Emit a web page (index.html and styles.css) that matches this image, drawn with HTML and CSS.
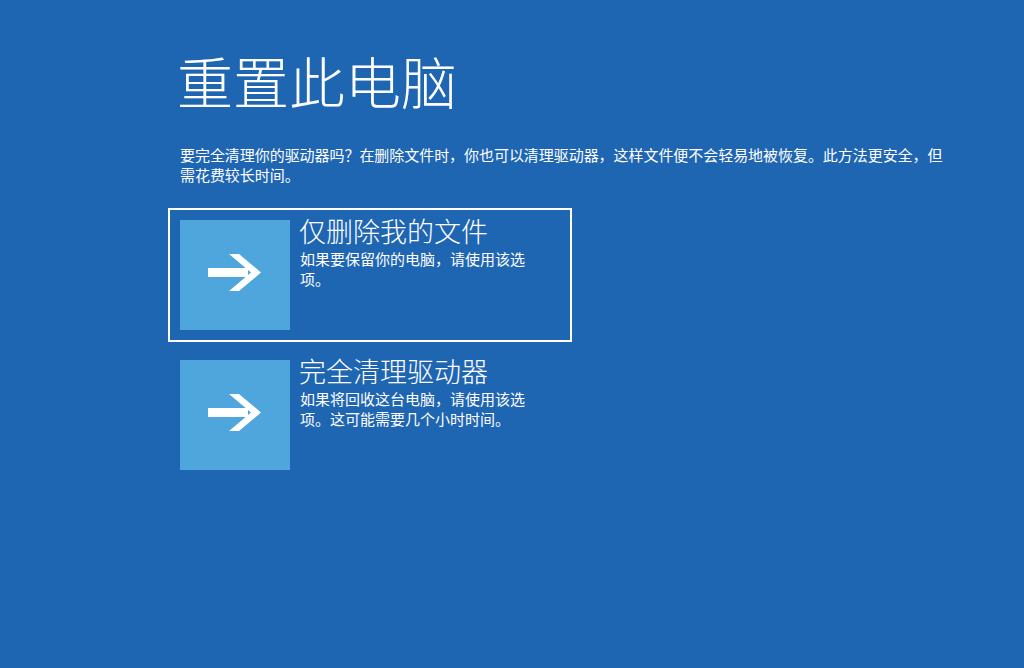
FILE: index.html
```html
<!DOCTYPE html>
<html lang="zh-CN">
<head>
<meta charset="utf-8">
<title>重置此电脑</title>
<link rel="stylesheet" href="styles.css">
</head>
<body>
<main class="page">
  <h1 class="title">重置此电脑</h1>
  <p class="desc">要完全清理你的驱动器吗？在删除文件时，你也可以清理驱动器，这样文件便不会轻易地被恢复。此方法更安全，但需花费较长时间。</p>
  <div class="options">
    <div class="option selected">
      <div class="tile">
        <svg class="arrow" viewBox="0 0 53 37" width="53" height="37" aria-hidden="true">
          <polygon points="0,14 40,14 40,23 0,23" fill="#fff"/>
          <polygon points="21,0 31,0 53,18.5 31,37 21,37 43,18.5" fill="#fff"/>
        </svg>
      </div>
      <div class="text">
        <div class="heading">仅删除我的文件</div>
        <div class="sub">如果要保留你的电脑，请使用该选项。</div>
      </div>
    </div>
    <div class="option">
      <div class="tile">
        <svg class="arrow" viewBox="0 0 53 37" width="53" height="37" aria-hidden="true">
          <polygon points="0,14 40,14 40,23 0,23" fill="#fff"/>
          <polygon points="21,0 31,0 53,18.5 31,37 21,37 43,18.5" fill="#fff"/>
        </svg>
      </div>
      <div class="text">
        <div class="heading">完全清理驱动器</div>
        <div class="sub">如果将回收这台电脑，请使用该选项。这可能需要几个小时时间。</div>
      </div>
    </div>
  </div>
</main>
</body>
</html>
```
FILE: styles.css
```css
html, body {
  margin: 0;
  padding: 0;
  height: 100%;
}
body {
  background: #1f66b2;
  color: #ffffff;
  font-family: "Noto Sans CJK SC", "Noto Sans", sans-serif;
  overflow: hidden;
}
.page {
  padding: 48px 0 0 180px;
}
.title {
  margin: 0 0 0 -3px;
  font-size: 56px;
  line-height: 64px;
  font-weight: 300;
  letter-spacing: 0;
}
.desc {
  margin: 33px 0 0 0;
  width: 770px;
  font-size: 15px;
  line-height: 20px;
  letter-spacing: -0.05px;
}
.options {
  margin: 23px 0 0 -12px;
  display: flex;
  flex-direction: column;
  gap: 6px;
}
.option {
  box-sizing: border-box;
  width: 404px;
  padding: 10px;
  border: 2px solid transparent;
  display: flex;
  gap: 10px;
}
.option.selected {
  border-color: #ffffff;
}
.tile {
  width: 110px;
  height: 110px;
  flex: none;
  background: #4ea6dc;
  position: relative;
}
.arrow {
  position: absolute;
  left: 28px;
  top: 34px;
  display: block;
}
.text {
  width: 232px;
}
.heading {
  font-size: 27px;
  line-height: 22px;
  font-weight: 300;
  margin-bottom: 7px;
  margin-left: -1px;
}
.sub {
  font-size: 15px;
  line-height: 20px;
}
```
